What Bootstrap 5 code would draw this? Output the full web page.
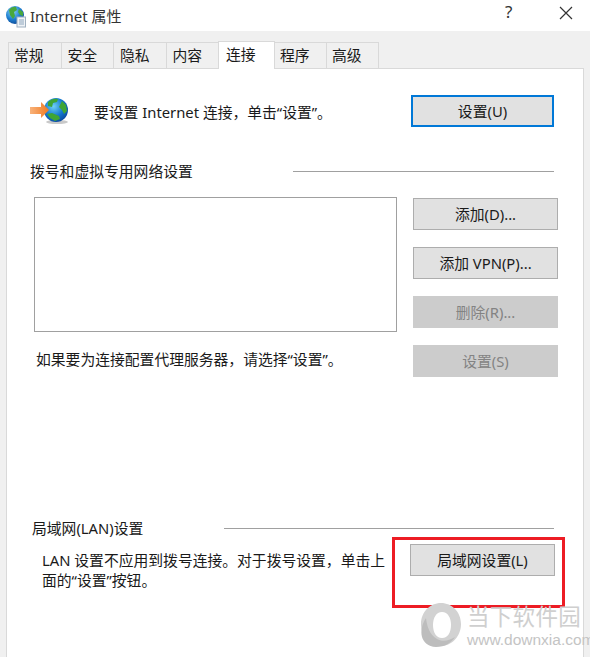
<!DOCTYPE html>
<html lang="zh-CN">
<head>
    <meta charset="UTF-8">
    <title>Internet 属性</title>
    <link href="https://cdn.jsdelivr.net/npm/bootstrap@5.3.0/dist/css/bootstrap.min.css" rel="stylesheet">
    <style>
        html, body { height: 657px; overflow: hidden; }
        body { background: #f0f0f0; color: #1a1a1a; font: 14.8px/20px "Noto Sans", "Noto Sans CJK SC", sans-serif; }
        .dlg { height: 657px; position: relative; }

        .titlebar { height: 31px; background: #fff; padding-left: 5px; }
        .titlebar .win-title { font-size: 15px; margin-left: 3px; color: #333; }
        .win-help { position: absolute; left: 505px; top: 2px; font-size: 17px; color: #333; }
        .win-close { position: absolute; left: 559px; top: 6px; }

        .tabstrip { margin: 10px 0 0 8px; height: 27px; align-items: flex-end; position: relative; z-index: 1; }
        .tabitem { width: 53.5px; height: 26px; padding: 0 0 0 6px; line-height: 25px; background: #f0f0f0; border: 1px solid #d9d9d9; border-bottom: 0; margin-right: -1px; white-space: nowrap; }
        .tabitem:first-child { padding-left: 5px; }
        .tabitem.on { width: 57px; height: 28px; background: #fff; padding-left: 7px; line-height: 24px; margin-bottom: -1px; }
        .tabitem.on ~ .tabitem { width: 53px; padding-left: 5px; }

        .sheet { height: 589px; margin: 0 6px; background: #fff; border: 1px solid #d9d9d9; border-bottom: 0; padding: 26px 29px 0 23px; }
        .connect-row { height: 32px; }
        .connect-row .globe { width: 44px; margin-right: 20px; margin-top: 2px; }
        .connect-text { padding-top: 2px; }

        .legend { height: 20px; }
        .legend .rule { height: 1px; background: #a0a0a0; }
        .legend-dial { margin-top: 34px; }
        .legend-dial .rule { width: 261px; }
        .legend-lan { margin-top: 141px; }
        .legend-lan .rule { width: 330px; }
        .legend-lan span { margin-left: 2px; }

        .dial-body { margin-top: 16px; margin-right: -4px; }
        .dial-left { width: 363px; margin-left: 4px; }
        .listbox { height: 135px; border: 1px solid #a0a0a0; background: #fff; }
        .dial-hint { margin: 17px 0 0 2px; }
        .dial-btns { width: 145px; margin-top: 1px; gap: 17px; }

        .lan-body { margin: 6px -1px 0 12px; }
        .lan-text { width: 346px; margin-top: 6px; }

        .winbtn { width: 145px; height: 32px; padding: 0; border-radius: 0; background: #e1e1e1; border: 1px solid #adadad; color: #1a1a1a; font: inherit; line-height: 28px; }
        .winbtn.primary { width: 143px; border: 2px solid #0078d7; }
        .winbtn:disabled { background: #ccc; border-color: #ccc; color: #838383; opacity: 1; }

        .redbox { position: absolute; left: 392px; top: 537px; width: 173px; height: 71px; border: 3px solid #ed1c24; }
        .wm-logo { position: absolute; left: 418px; top: 602px; }
        .wm-text { position: absolute; left: 467px; top: 603px; color: #cfcfcf; white-space: nowrap; }
        .wm-name { font-size: 22.5px; letter-spacing: .3px; line-height: 28px; }
        .wm-url { font: 15.5px/18px "Liberation Sans", sans-serif; color: #c4c4c4; margin-top: 0; }
    </style>
</head>
<body>
<div class="dlg">
    <div class="titlebar d-flex align-items-center">
        <svg width="22" height="24" viewBox="0 0 22 24">
            <defs>
                <radialGradient id="tb" cx=".38" cy=".3" r=".8"><stop offset="0" stop-color="#8fd6f5"/><stop offset=".55" stop-color="#1e7fd0"/><stop offset="1" stop-color="#0b3f8c"/></radialGradient>
            </defs>
            <circle cx="10" cy="11" r="9" fill="url(#tb)"/>
            <path d="M4 6c2-3 5-3.500 7-3l1 3-3 2 1 4-2 3-3-4zM14 5l4 3 0 4-3-1-2-3z" fill="#49a83c"/>
            <rect x="12" y="13" width="8.500" height="10" fill="#eef2f6" stroke="#9fb0c0"/>
            <path d="M14 16h5M14 18h5M14 20h5" stroke="#8ea6bd"/>
        </svg>
        <span class="win-title">Internet 属性</span>
    </div>
    <span class="win-help">?</span>
    <svg class="win-close" width="14" height="14" viewBox="0 0 14 14"><path d="M1 1l12 12M13 1L1 13" stroke="#333" stroke-width="1.200"/></svg>

    <div class="tabstrip d-flex">
        <div class="tabitem">常规</div>
        <div class="tabitem">安全</div>
        <div class="tabitem">隐私</div>
        <div class="tabitem">内容</div>
        <div class="tabitem on">连接</div>
        <div class="tabitem">程序</div>
        <div class="tabitem">高级</div>
    </div>

    <div class="sheet">
        <div class="connect-row d-flex align-items-center">
            <svg class="globe" width="44" height="32" viewBox="0 0 44 32">
                <defs>
                    <radialGradient id="gl" cx=".4" cy=".35" r=".75"><stop offset="0" stop-color="#6fd0f5"/><stop offset=".55" stop-color="#1478cf"/><stop offset="1" stop-color="#0a3f94"/></radialGradient>
                    <linearGradient id="ar" x1="0" y1="0" x2="1" y2="0"><stop offset="0" stop-color="#f9b27a"/><stop offset="1" stop-color="#ef7a22"/></linearGradient>
                </defs>
                <ellipse cx="27" cy="26" rx="11" ry="2" fill="#c9c9c9"/>
                <circle cx="26" cy="14" r="12" fill="url(#gl)"/>
                <path d="M18 6c3-3 7-4 10-3l-1 3-4 1-1 4-4-1zM32 5l4 4 1 6-3 3-2-4-3-3zM17 18l5-1 7 3 1 3-5 2-5-3z" fill="#3fa535"/>
                <path d="M0 11h11V6l8 8-8 8v-4H0z" fill="url(#ar)"/>
            </svg>
            <span class="connect-text">要设置 Internet 连接，单击“设置”。</span>
            <button class="btn winbtn primary ms-auto">设置(U)</button>
        </div>

        <div class="legend legend-dial d-flex align-items-center">
            <span>拨号和虚拟专用网络设置</span>
            <div class="rule ms-auto"></div>
        </div>

        <div class="dial-body d-flex justify-content-between">
            <div class="dial-left">
                <div class="listbox"></div>
                <div class="dial-hint">如果要为连接配置代理服务器，请选择“设置”。</div>
            </div>
            <div class="dial-btns d-flex flex-column">
                <button class="btn winbtn">添加(D)...</button>
                <button class="btn winbtn">添加 VPN(P)...</button>
                <button class="btn winbtn" disabled>删除(R)...</button>
                <button class="btn winbtn" disabled>设置(S)</button>
            </div>
        </div>

        <div class="legend legend-lan d-flex align-items-center">
            <span>局域网(LAN)设置</span>
            <div class="rule ms-auto"></div>
        </div>

        <div class="lan-body d-flex justify-content-between">
            <div class="lan-text">LAN 设置不应用到拨号连接。对于拨号设置，单击上面的“设置”按钮。</div>
            <button class="btn winbtn">局域网设置(L)</button>
        </div>
    </div>

    <div class="redbox"></div>
    <svg class="wm-logo" width="46" height="47" viewBox="0 0 46 47">
        <path fill-rule="evenodd" d="M23 1c11 0 20 9 20 21s-9 22-20 22S3 34 3 22 12 1 23 1zm1 9c-6 0-9 6-9 13s3 13 9 13 9-6 9-13-3-13-9-13z" fill="#d2d2d2"/>
        <path d="M8 16C0 28 2 44 18 45c9 0 15-4 19-10-6 4-13 5-18 2C12 33 9 25 8 16z" fill="#bdbdbd"/>
    </svg>
    <div class="wm-text">
        <div class="wm-name">当下软件园</div>
        <div class="wm-url">www.downxia.com</div>
    </div>
</div>
<script src="https://cdn.jsdelivr.net/npm/bootstrap@5.3.0/dist/js/bootstrap.bundle.min.js"></script>
</body>
</html>
